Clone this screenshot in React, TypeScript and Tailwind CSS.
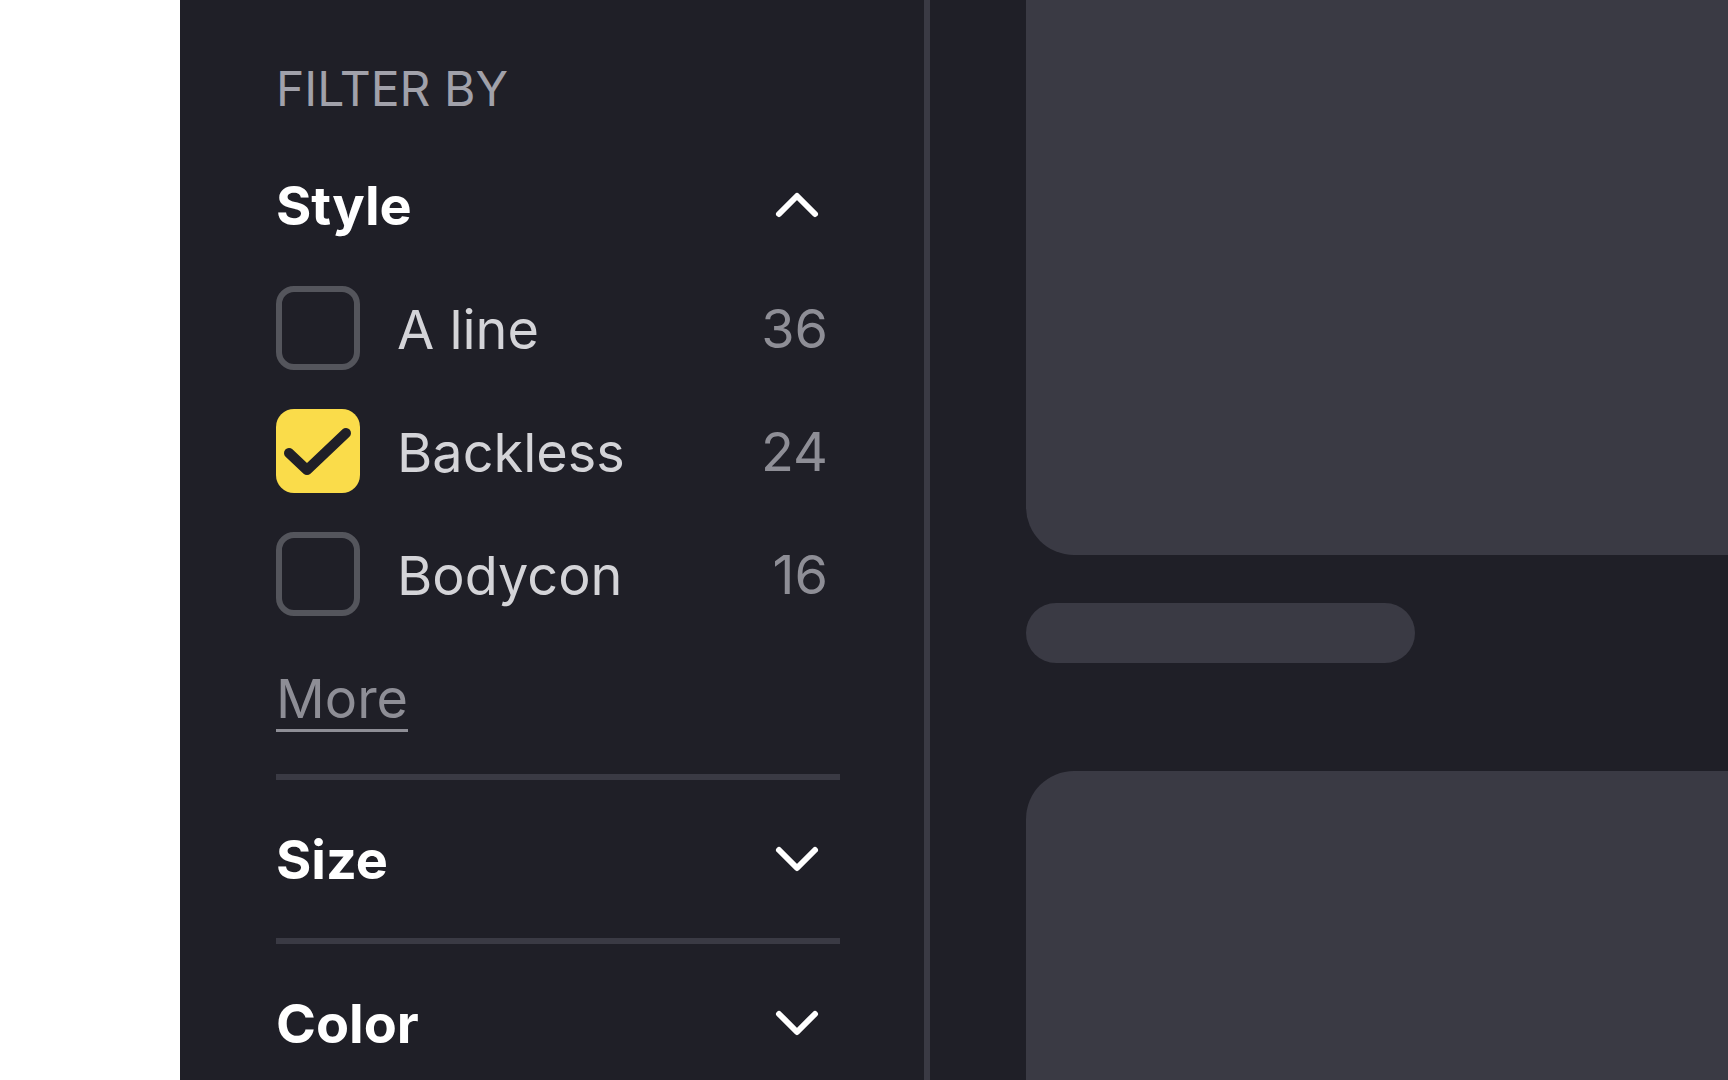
import { ChevronDown, ChevronUp } from "lucide-react";

const styles = [
  { label: "A line", count: 36, checked: false },
  { label: "Backless", count: 24, checked: true },
  { label: "Bodycon", count: 16, checked: false },
];

function Checkbox({ checked }: { checked: boolean }) {
  if (checked) {
    return (
      <span className="flex h-[84px] w-[84px] shrink-0 items-center justify-center rounded-[18px] bg-[#fadc4a]">
        <svg width="84" height="84" viewBox="0 0 84 84" fill="none">
          <polyline
            points="13,44 31,61 70,24"
            stroke="#1f1f27"
            strokeWidth="10"
            strokeLinecap="round"
            strokeLinejoin="round"
          />
        </svg>
      </span>
    );
  }
  return (
    <span className="h-[84px] w-[84px] shrink-0 rounded-[18px] border-[6px] border-[#54555c]" />
  );
}

function SectionHeader({ title, open }: { title: string; open?: boolean }) {
  return (
    <button type="button" className="flex h-[72px] w-full items-center justify-between">
      <span className="pt-[2px] text-[54px] font-bold leading-none text-white">{title}</span>
      <span className="mr-[7px] text-white">
        {open ? (
          <ChevronUp size={72} strokeWidth={2} />
        ) : (
          <ChevronDown size={72} strokeWidth={2} />
        )}
      </span>
    </button>
  );
}

export default function App() {
  return (
    <div
      className="flex h-screen w-screen overflow-hidden bg-white"
      style={{ fontFamily: "Inter, 'Noto Sans', sans-serif" }}
    >
      <div className="w-[180px] shrink-0 bg-white" />

      <aside className="w-[750px] shrink-0 border-r-[6px] border-[#3a3a44] bg-[#1f1f27] pl-[96px] pr-[84px] pt-[65px]">
        <h2 className="text-[48px] font-normal uppercase leading-none text-[#a1a1aa]">Filter by</h2>

        <section className="mt-[56px] pb-[42px]">
          <SectionHeader title="Style" open />
          <ul className="mt-[45px] flex flex-col gap-[39px]">
            {styles.map((s) => (
              <li key={s.label} className="flex h-[84px] items-center">
                <Checkbox checked={s.checked} />
                <span className="ml-[37px] flex-1 pt-[4px] text-[54px] leading-none text-[#d4d4d8]">
                  {s.label}
                </span>
                <span className="pr-[12px] pt-[2px] text-[54px] leading-none text-[#8e8e96]">{s.count}</span>
              </li>
            ))}
          </ul>
          <div className="mt-[56px]">
            <a className="inline-block border-b-[3px] border-[#8e8e96] pb-[3px] text-[54px] leading-none text-[#8e8e96]">
              More
            </a>
          </div>
        </section>

        <div className="h-[6px] bg-[#3a3a44]" />
        <section className="py-[43px]">
          <SectionHeader title="Size" />
        </section>
        <div className="h-[6px] bg-[#3a3a44]" />
        <section className="py-[43px]">
          <SectionHeader title="Color" />
        </section>
      </aside>

      <main className="flex-1 overflow-hidden bg-[#1f1f27] pl-[96px]">
        <div className="-mt-[100px] h-[655px] w-[900px] rounded-[48px] bg-[#3a3a44]" />
        <div className="mt-[48px] h-[60px] w-[389px] rounded-full bg-[#3a3a44]" />
        <div className="mt-[108px] h-[600px] w-[900px] rounded-[48px] bg-[#3a3a44]" />
      </main>
    </div>
  );
}
